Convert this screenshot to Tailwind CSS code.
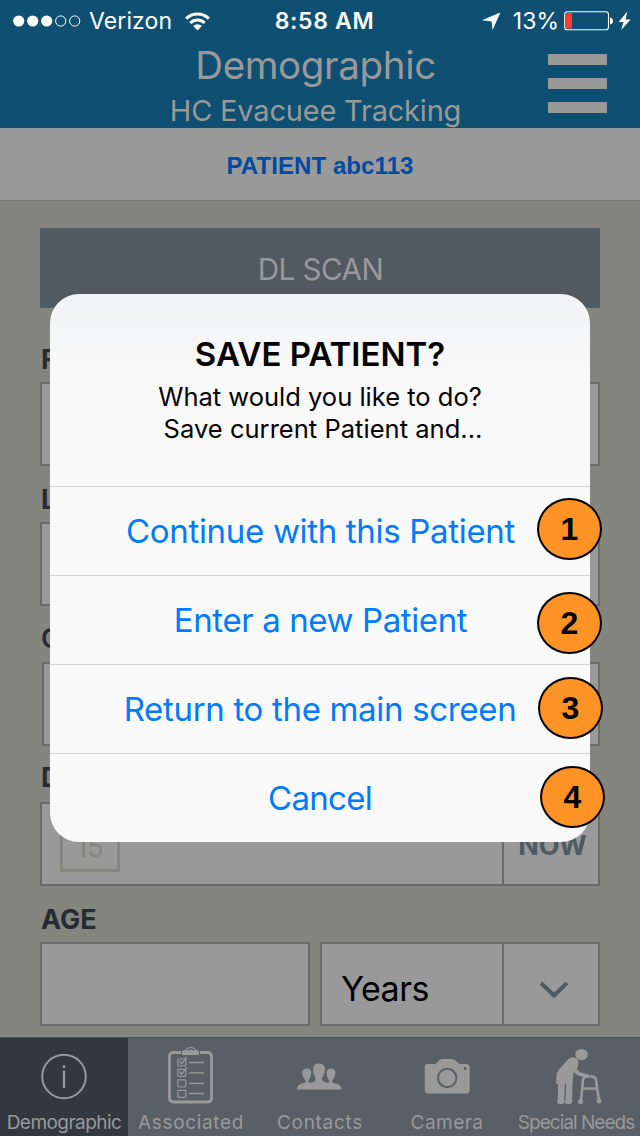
<!DOCTYPE html>
<html lang="en">
<head>
<meta charset="utf-8">
<title>Demographic</title>
<script src="https://cdn.jsdelivr.net/npm/@tailwindcss/browser@4"></script>
</head>
<body class="relative w-[640px] h-[1136px] overflow-hidden bg-[#84857f] font-['Inter',sans-serif] flex flex-col whitespace-nowrap">
<header class="h-[128px] bg-[#0f4f71] text-[#999999] relative shrink-0">
  <div class="h-[41px] grid grid-cols-[1fr_auto_1fr] items-center text-white text-[23px] leading-[42px] pl-[13px] pr-[8px]">
    <div class="flex items-center">
      <svg class="w-[68px] h-[12px]" viewBox="0 0 68 12"><g fill="#fff"><circle cx="5.7" cy="6" r="5.6"/><circle cx="19.7" cy="6" r="5.6"/><circle cx="33.7" cy="6" r="5.6"/></g><g fill="none" stroke="#fff"><circle cx="47.7" cy="6" r="5.1"/><circle cx="61.7" cy="6" r="5.1"/></g></svg>
      <span class="ml-[8px] tracking-[0.1px]">Verizon</span>
      <svg class="ml-[13px] w-[25px] h-[19px]" viewBox="0 0 25 19"><g fill="none" stroke="#fff" stroke-width="3"><path d="M1.2 6.6a16 16 0 0 1 22.6 0"/><path d="M5.3 11a10.2 10.2 0 0 1 14.4 0"/></g><path d="M12.5 18.5 8.2 14a6.1 6.1 0 0 1 8.6 0z" fill="#fff"/></svg>
    </div>
    <span class="font-semibold tracking-[0.65px] pl-[4px]">8:58 AM</span>
    <div class="flex items-center justify-end">
      <svg class="w-[19px] h-[19px]" viewBox="0 0 19 19"><path d="M18.3.6 10.6 18.3 9.6 9.6 0 8.3z" fill="#fff"/></svg>
      <span class="ml-[12px]">13%</span>
      <svg class="ml-[5px] w-[68px] h-[20px]" viewBox="0 0 68 20"><rect x=".7" y=".8" width="43.8" height="18" rx="2.8" fill="none" stroke="#fff" stroke-width="1.1"/><path d="M2 3.5A1.5 1.5 0 0 1 3.5 2H8v15.5H3.5A1.5 1.5 0 0 1 2 16z" fill="#ff3b30"/><path d="M46 6.4q3 .8 3 3.500t-3 3.5z" fill="#fff"/><path d="M63.3.4 54.700 11h4.8l-2.300 8 9.400-10.600h-5z" fill="#fff"/></svg>
    </div>
  </div>
  <div class="flex flex-col items-center pr-[9px]">
    <h1 class="font-normal text-[38.5px] leading-[49px] tracking-[-0.35px]">Demographic</h1>
    <h2 class="font-normal text-[29px] leading-[42px] tracking-[-0.2px]">HC Evacuee Tracking</h2>
  </div>
  <div class="absolute left-[548px] top-[54px] flex flex-col gap-[13px]">
    <i class="w-[59px] h-[11px] bg-[#999999]"></i><i class="w-[59px] h-[11px] bg-[#999999]"></i><i class="w-[59px] h-[11px] bg-[#999999]"></i>
  </div>
</header>
<div class="h-[73px] shrink-0 bg-[#999999] border-b border-[#777874] text-center font-['Liberation_Sans',sans-serif] font-bold text-[24px] leading-[75px] tracking-[0.08px] text-[#004aa0]">PATIENT abc113</div>
<main class="px-[40px] pt-[27px] flex flex-col text-[#262c31]">
  <button class="h-[80px] bg-[#515961] text-[#999999] text-[29.5px] font-normal leading-[82px] tracking-[-0.45px] pl-[1px]">DL SCAN</button>
  <div class="h-[74px] pt-[31px] pl-[1px] text-[27px] leading-[41px] font-bold">F</div>
  <div class="h-[84px] border-2 border-[#6a6a6a] bg-[#999999]"></div>
  <div class="h-[56px] pt-[13px] pl-[1px] text-[27px] leading-[41px] font-bold">L</div>
  <div class="h-[84px] border-2 border-[#6a6a6a] bg-[#999999]"></div>
  <div class="h-[56px] pt-[12px] pl-[1px] text-[27px] leading-[41px] font-semibold">G</div>
  <div class="ml-[2px] h-[84px] border-2 border-[#6a6a6a] bg-[#999999]"></div>
  <div class="h-[56px] pt-[11px] pl-[1px] text-[27px] leading-[41px] font-bold">D</div>
  <div class="h-[84px] border-2 border-[#6a6a6a] bg-[#999999] flex">
    <div class="grow pl-[18px] pt-[8px]"><div class="w-[60px] h-[60px] border-3 border-[#858680] text-[#858680] text-[27px] leading-[66px] text-center">15</div></div>
    <div class="w-[96px] border-l-2 border-[#6a6a6a] text-[#515961] text-[27px] font-bold text-center leading-[83px] pl-[3px]">NOW</div>
  </div>
  <div class="h-[56px] pt-[13px] pl-[1px] text-[27px] leading-[42px] font-bold">AGE</div>
  <div class="flex gap-[10px]">
    <div class="w-[270px] h-[84px] border-2 border-[#6a6a6a] bg-[#999999]"></div>
    <div class="w-[280px] h-[84px] border-2 border-[#6a6a6a] bg-[#999999] flex">
      <div class="grow pl-[19px] text-black text-[34px] leading-[90px] tracking-[-0.5px]">Years</div>
      <div class="w-[96px] border-l-2 border-[#6a6a6a] flex items-center justify-center"><svg class="mt-[11px] ml-[5px] w-[30px] h-[20px]" viewBox="0 0 30 20"><path d="M2 3 15 15.500 28 3" fill="none" stroke="#515961" stroke-width="4"/></svg></div>
    </div>
  </div>
</main>
<nav class="absolute left-0 top-[1037px] w-full h-[99px] grid grid-cols-5 bg-[#585f67] border-t border-[#4e5359] text-[#999999] text-[19px]">
  <div class="bg-[#323840] flex flex-col items-center"><svg class="h-[71px] w-[60px]" viewBox="0 0 60 71" fill="none" stroke="#999"><circle cx="30" cy="38.5" r="21.800" stroke-width="2"/><path d="M30 32.500v17.500M30 27v3" stroke-width="2.300"/></svg><span class="leading-[27px] tracking-[-0.55px]">Demographic</span></div>
  <div class="flex flex-col items-center"><svg class="h-[71px] w-[60px]" viewBox="0 0 60 71" fill="none" stroke="#999"><path d="M19 14.500h-8A3.500 3.500 0 0 0 7.500 18v42.500A3.500 3.500 0 0 0 11 64h35a3.500 3.500 0 0 0 3.500-3.500V18a3.500 3.500 0 0 0-3.500-3.500h-8" stroke-width="2.800"/><path d="M20 17v-3q0-2 3.500-2 1.500-3 5.300-3t5.200 3q3 0 3 2v3z" fill="#999" stroke="none"/><path d="M25 12.500q3.800-3.500 7.500 0" stroke="#585f67" stroke-width="1.200"/><rect x="15.800" y="21" width="8" height="7" rx=".8" stroke-width="1.200"/><rect x="15.800" y="31.300" width="8" height="7" rx=".8" stroke-width="1.200"/><rect x="15.800" y="41.800" width="8" height="7" rx=".8" stroke-width="1.200"/><rect x="15.800" y="52.300" width="8" height="7" rx=".8" stroke-width="1.200"/><path d="m17.500 23 2 3 5.500-7M17.500 33.300l2 3 5.500-7M27 24.500h15M27 34.800h15M27 45.300h15M27 55.500h15" stroke-width="1.300"/></svg><span class="leading-[27px] tracking-[0.65px] pr-[2px]">Associated</span></div>
  <div class="flex flex-col items-center"><svg class="h-[71px] w-[60px]" viewBox="0 0 60 71" fill="#999"><path transform="translate(-.5)" d="M7.500 51.500q0-4.500 4-5.500l4-1.300q1-.7.500-2.200-3.300-3.500-3.300-7.500 0-4.500 4.600-4.500t4.500 4.500q0 4-2.800 7.500-.4 2 1 2.500 6-1.500 6-3.500v-2Q23.500 36 23.500 31q0-5.500 6-5.500t6 5.500q0 5-3 8.500v2q0 2 6 3.500 1.500-.5 1-2.500-2.500-3.500-2.500-7.500 0-4.500 4.500-4.500t4.500 4.500q0 4-3.200 7.500-.5 1.500.6 2.200l4.100 1.300q4.500 1 4.500 5.500z"/></svg><span class="leading-[27px] tracking-[0.7px]">Contacts</span></div>
  <div class="flex flex-col items-center"><svg class="h-[71px] w-[60px]" viewBox="0 0 60 71" fill="#999"><g transform="translate(-.8)"><path d="M11 26h6q2.500 0 4-2.500 1.500-2.500 4-2.500h10q2.500 0 4.500 2.500T43.500 26H49a3.500 3.500 0 0 1 3.500 3.500V52a3.500 3.500 0 0 1-3.500 3.500H11A3.500 3.500 0 0 1 7.500 52V29.500A3.500 3.500 0 0 1 11 26z"/><circle cx="30" cy="40" r="9.200" stroke="#585f67" stroke-width="2"/><circle cx="48" cy="30.500" r="1.500" fill="#585f67"/></g></svg><span class="leading-[27px] tracking-[0.45px] pr-[2px]">Camera</span></div>
  <div class="flex flex-col items-center"><svg class="h-[71px] w-[60px]" viewBox="0 0 60 71" fill="#999"><ellipse cx="35.500" cy="16.500" rx="6.300" ry="5.500"/><path d="M10.300 45.500Q9.500 37 12.500 32L22 21.500Q26 17.500 30.500 20.500 33.500 23 32 27l-1 4.500 3.500 3 8 2Q44 39 41 39.500L32 37.500 27.500 34l-1 12H10.300z"/><path d="M12 45h6.800l-.5 16.500q1 4.500-2.500 4.500h-2.500q-3.500-.5-1.500-4.500zM20 45h6.500l-.4 16.500q1 4.500-2.500 4.500h-2.500q-3.500-.5-1.500-4.500z"/><path d="m35 63 2-21q.5-3.500 4-3.500h5q3.500 0 4 3.500l3 21M36 50.500h15" fill="none" stroke="#999" stroke-width="2.600"/><circle cx="34.500" cy="63.500" r="2.500"/><circle cx="53" cy="63" r="2.500"/></svg><span class="leading-[27px] tracking-[-0.98px]">Special Needs</span></div>
</nav>
<section class="absolute left-[50px] top-[294px] w-[540px] h-[548px] rounded-[29px] bg-linear-to-b from-[#f2f3f6] via-[#f9f9f9] via-15% to-[#f9f9f9] text-center">
  <div class="h-[192px] pt-[40px] text-black">
    <h3 class="text-[33px] font-semibold leading-[41px]">SAVE PATIENT?</h3>
    <p class="text-[25.5px] leading-[32px] pt-[6px]">What would you like to do?<br><span class="pl-[6px] tracking-[0.03px]">Save current Patient and...</span></p>
  </div>
  <div class="text-[33px] leading-[88px] tracking-[-0.32px] text-[#007aff] divide-y divide-[#d3d4d6] border-t border-[#d3d4d6]">
    <div class="pl-[1px]">Continue with this Patient</div>
    <div class="tracking-[-0.4px] pl-[1px]">Enter a new Patient</div>
    <div>Return to the main screen</div>
    <div class="tracking-[-0.7px]">Cancel</div>
  </div>
</section>
<div class="font-['Liberation_Sans',sans-serif] font-bold text-[32px] leading-[58px] text-black text-center">
  <div class="absolute left-[537px] top-[498px] w-[65px] h-[62px] rounded-[50%] border-2 border-black bg-[#ff9326]">1</div>
  <div class="absolute left-[537px] top-[592px] w-[65px] h-[62px] rounded-[50%] border-2 border-black bg-[#ff9326]">2</div>
  <div class="absolute left-[538px] top-[677px] w-[65px] h-[62px] rounded-[50%] border-2 border-black bg-[#ff9326]">3</div>
  <div class="absolute left-[540px] top-[766px] w-[65px] h-[62px] rounded-[50%] border-2 border-black bg-[#ff9326]">4</div>
</div>
</body>
</html>
